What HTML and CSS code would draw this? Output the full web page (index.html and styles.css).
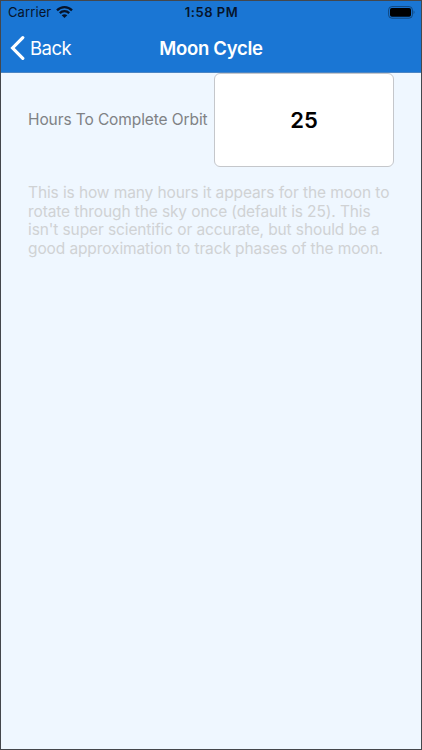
FILE: index.html
```html
<!DOCTYPE html>
<html lang="en">
<head>
<meta charset="utf-8">
<title>Moon Cycle</title>
<link rel="stylesheet" href="styles.css">
</head>
<body>
<div class="screen">
  <header class="header">
    <div class="status">
      <div class="carrier">
        <span class="carrier-name">Carrier</span>
        <svg class="wifi" viewBox="0 0 17 12" width="17" height="12" aria-hidden="true">
          <path d="M1 4.4c4.2-4.3 10.8-4.3 15 0M3.8 7.1c2.6-2.6 6.8-2.6 9.4 0" fill="none" stroke="#06142b" stroke-width="2.3"/>
          <path d="M8.5 12 5.7 9.2c1.6-1.4 4-1.4 5.6 0z" fill="#06142b"/>
        </svg>
      </div>
      <span class="time">1:58 PM</span>
      <svg class="battery" viewBox="0 0 27 13" width="27" height="13" aria-hidden="true">
        <rect x=".6" y=".6" width="23.8" height="11.6" rx="3.3" fill="none" stroke="#10477f" stroke-width="1"/>
        <rect x="2" y="2" width="21" height="8.8" rx="1.8" fill="#000"/>
        <path d="M25.6 4.6c1.2.6 1.2 3 0 3.6z" fill="#10477f"/>
      </svg>
    </div>
    <nav class="nav">
      <div class="back">
        <svg viewBox="0 0 15 26" width="15" height="26" aria-hidden="true">
          <path d="M12.8 2.6 2.6 13l10.2 10.4" fill="none" stroke="#fff" stroke-width="3.2" stroke-linecap="round"/>
        </svg>
        <span class="back-label">Back</span>
      </div>
      <h1 class="title">Moon Cycle</h1>
    </nav>
  </header>
  <main class="content">
    <div class="field">
      <label class="label" for="hours">Hours To Complete Orbit</label>
      <input class="input" id="hours" type="text" value="25">
    </div>
    <p class="hint">This is how many hours it appears for the moon to<br>rotate through the sky once (default is 25). This<br>isn't super scientific or accurate, but should be a<br>good approximation to track phases of the moon.</p>
  </main>
</div>
</body>
</html>
```
FILE: styles.css
```css
* { box-sizing: border-box; }
body { margin: 0; font-family: Inter, "Liberation Sans", sans-serif; }
.screen {
  width: 422px;
  height: 750px;
  border: 1px solid #44474c;
  background: #eff7ff;
  overflow: hidden;
}
.header { height: 72px; background: #1a76d4; border-bottom: 1px solid #4c86c4; }
.status {
  height: 22px;
  display: grid;
  grid-template-columns: 1fr auto 1fr;
  align-items: center;
  padding: 0 6px 0 7px;
  color: #06142b;
}
.carrier { display: flex; align-items: center; gap: 5px; }
.carrier-name { font-size: 13px; letter-spacing: 0.1px; }
.time { font-size: 13px; font-weight: 600; letter-spacing: 0.5px; }
.battery { justify-self: end; }
.nav {
  height: 49px;
  display: grid;
  grid-template-columns: 1fr auto 1fr;
  align-items: center;
  padding: 0 9px;
  color: #fff;
}
.back { display: flex; align-items: center; gap: 5px; }
.back-label { font-size: 18.5px; letter-spacing: -0.5px; }
.title { margin: 0; font-size: 18.5px; font-weight: 600; letter-spacing: -0.3px; }
.content { padding: 0 27px; }
.field { display: flex; align-items: center; justify-content: space-between; }
.label {
  font-size: 15.5px;
  color: #808285;
  white-space: nowrap;
  letter-spacing: -0.1px;
  padding-bottom: 2px;
}
.input {
  width: 180px;
  height: 94px;
  border: 1px solid #c5c7cb;
  border-radius: 6px;
  background: #fff;
  color: #000;
  font: 600 22px Inter, "Liberation Sans", sans-serif;
  text-align: center;
  padding: 0;
}
.hint {
  margin: 17px 0 0;
  font-size: 15.5px;
  line-height: 18.7px;
  letter-spacing: -0.11px;
  color: #d0d2d4;
  white-space: nowrap;
}
```
